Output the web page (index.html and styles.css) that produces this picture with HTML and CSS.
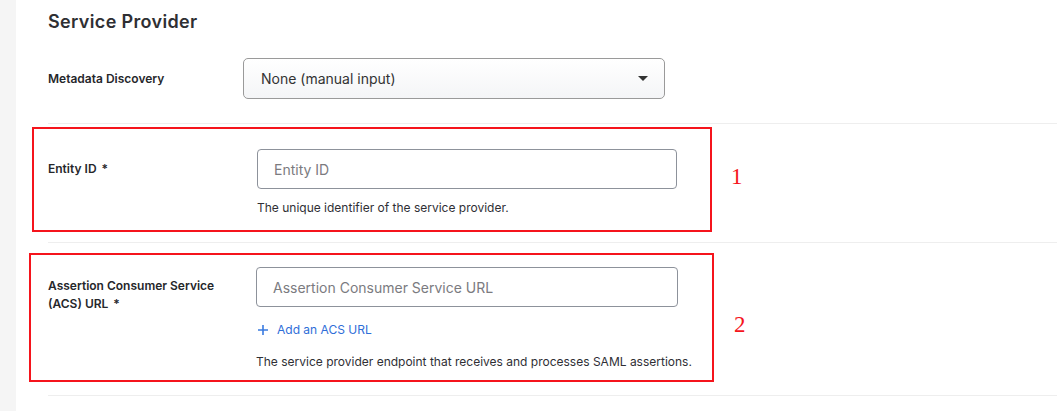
FILE: index.html
```html
<!DOCTYPE html>
<html lang="en">
<head>
<meta charset="utf-8">
<title>Service Provider</title>
<link rel="stylesheet" href="styles.css">
</head>
<body>
<div class="page">
  <div class="strip"></div>
  <main class="content">
    <h2 class="title">Service Provider</h2>

    <div class="row row-select">
      <div class="label">Metadata Discovery</div>
      <div class="field field-select">
        <div class="select">
          <span>None (manual input)</span>
          <span class="caret"></span>
        </div>
      </div>
    </div>

    <div class="row row-entity">
      <div class="label">Entity ID <span class="req">*</span></div>
      <div class="field">
        <div class="input"><span class="ph">Entity ID</span></div>
        <div class="help help-entity">The unique identifier of the service provider.</div>
      </div>
      <div class="mark mark-1"></div>
      <div class="num num-1">1</div>
    </div>

    <div class="row row-acs">
      <div class="label">Assertion Consumer Service<br>(ACS) URL <span class="req">*</span></div>
      <div class="field">
        <div class="input"><span class="ph">Assertion Consumer Service URL</span></div>
        <div class="add">
          <svg class="plus" width="10" height="10" viewBox="0 0 10 10" aria-hidden="true"><path d="M5 0v10M0 5h10" stroke="currentColor" stroke-width="1.6" fill="none"/></svg>
          <span>Add an ACS URL</span>
        </div>
        <div class="help help-acs">The service provider endpoint that receives and processes SAML assertions.</div>
      </div>
      <div class="mark mark-2"></div>
      <div class="num num-2">2</div>
    </div>
  </main>
</div>
</body>
</html>
```

FILE: styles.css
```css
html, body {
  margin: 0;
  padding: 0;
  background: #ffffff;
}

body {
  font-family: Inter, "Noto Sans", "Liberation Sans", sans-serif;
  color: #2b2b2b;
  height: 411px;
  overflow: hidden;
}

.page {
  display: flex;
  min-height: 411px;
}

.strip {
  width: 16px;
  flex: 0 0 16px;
  background: #f5f5f5;
}

.content {
  flex: 1;
  margin-left: 32px;
}

.title {
  margin: 0;
  padding-top: 10px;
  font-size: 18px;
  line-height: 24px;
  font-weight: 600;
  color: #2f2f33;
  letter-spacing: 0.35px;
}

.row {
  position: relative;
  display: flex;
  align-items: flex-start;
}

.label {
  font-size: 12px;
  line-height: 18px;
  font-weight: 600;
  color: #26272b;
}

.req {
  margin-left: 2px;
}

.row-select {
  padding-top: 24px;
  padding-bottom: 24px;
  align-items: center;
  border-bottom: 1px solid #eeeeee;
}

.row-select .label {
  width: 195px;
  flex: 0 0 195px;
}

.select {
  box-sizing: border-box;
  width: 422px;
  height: 41px;
  border: 1px solid #9a9a9a;
  border-radius: 5px;
  background: linear-gradient(#ffffff, #f4f5f7);
  display: flex;
  align-items: center;
  justify-content: space-between;
  padding: 0 16px 0 17px;
  font-size: 14px;
  color: #333333;
}

.caret {
  width: 0;
  height: 0;
  border-left: 5px solid transparent;
  border-right: 5px solid transparent;
  border-top: 5px solid #333333;
}

.row-entity {
  padding-top: 25px;
  padding-bottom: 25px;
  border-bottom: 1px solid #eeeeee;
}

.row-acs {
  padding-top: 24px;
  padding-bottom: 24px;
  border-bottom: 1px solid #eeeeee;
}

.row-entity .label {
  width: 209px;
  flex: 0 0 209px;
  padding-top: 11px;
}

.row-acs .label {
  width: 208px;
  flex: 0 0 208px;
  padding-top: 10px;
}

.input {
  box-sizing: border-box;
  width: 420px;
  height: 40px;
  border: 1px solid #8d929b;
  border-radius: 4px;
  background: #ffffff;
  display: flex;
  align-items: center;
  padding-left: 16px;
  font-size: 14px;
}

.row-acs .input {
  width: 422px;
}

.ph {
  color: #7b7b7f;
}

.help {
  font-size: 12px;
  line-height: 18px;
  color: #2f2f35;
}

.help-entity {
  margin-top: 10px;
}

.add {
  margin-top: 14px;
  display: flex;
  align-items: center;
  gap: 9px;
  font-size: 12px;
  line-height: 18px;
  color: #2f6ed8;
  padding-left: 2px;
}

.plus {
  color: #3a7be0;
}

.help-acs {
  margin-top: 14px;
}

.mark {
  position: absolute;
  box-sizing: border-box;
  border: 2px solid #f5141c;
  pointer-events: none;
}

.mark-1 {
  left: -16px;
  top: 3px;
  width: 680px;
  height: 105px;
}

.mark-2 {
  left: -19px;
  top: 10px;
  width: 685px;
  height: 129px;
}

.num {
  position: absolute;
  font-family: "Liberation Serif", "DejaVu Serif", serif;
  font-size: 23px;
  line-height: 24px;
  color: #f5141c;
}

.num-1 {
  left: 683px;
  top: 41px;
}

.num-2 {
  left: 686px;
  top: 70px;
}
```
